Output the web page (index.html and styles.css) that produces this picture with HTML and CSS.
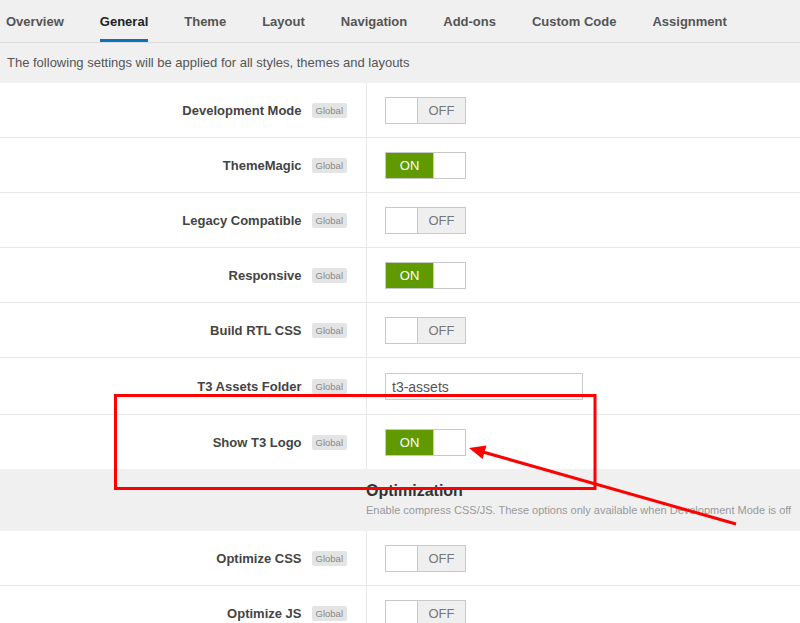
FILE: index.html
```html
<!DOCTYPE html>
<html>
<head>
    <title>T3 Framework - General</title>
    <link rel="stylesheet" href="styles.css">
</head>
<body>
    <div class="tabBar">
        <span class="tab">Overview</span>
        <span class="tab active">General</span>
        <span class="tab">Theme</span>
        <span class="tab">Layout</span>
        <span class="tab">Navigation</span>
        <span class="tab">Add-ons</span>
        <span class="tab">Custom Code</span>
        <span class="tab">Assignment</span>
    </div>
    <div class="intro">The following settings will be applied for all styles, themes and layouts</div>

    <div class="settings">
        <div class="row">
            <div class="rowLabel">Development Mode <span class="badge">Global</span></div>
            <div class="rowControl">
                <div class="toggle off"><span class="blank"></span><span class="state">OFF</span></div>
            </div>
        </div>
        <div class="row">
            <div class="rowLabel">ThemeMagic <span class="badge">Global</span></div>
            <div class="rowControl">
                <div class="toggle on"><span class="state">ON</span><span class="blank"></span></div>
            </div>
        </div>
        <div class="row">
            <div class="rowLabel">Legacy Compatible <span class="badge">Global</span></div>
            <div class="rowControl">
                <div class="toggle off"><span class="blank"></span><span class="state">OFF</span></div>
            </div>
        </div>
        <div class="row">
            <div class="rowLabel">Responsive <span class="badge">Global</span></div>
            <div class="rowControl">
                <div class="toggle on"><span class="state">ON</span><span class="blank"></span></div>
            </div>
        </div>
        <div class="row">
            <div class="rowLabel">Build RTL CSS <span class="badge">Global</span></div>
            <div class="rowControl">
                <div class="toggle off"><span class="blank"></span><span class="state">OFF</span></div>
            </div>
        </div>
        <div class="row tall">
            <div class="rowLabel">T3 Assets Folder <span class="badge">Global</span></div>
            <div class="rowControl">
                <input class="textInput" type="text" value="t3-assets">
            </div>
        </div>
        <div class="row last">
            <div class="rowLabel">Show T3 Logo <span class="badge">Global</span></div>
            <div class="rowControl">
                <div class="toggle on"><span class="state">ON</span><span class="blank"></span></div>
            </div>
        </div>

        <div class="groupHead">
            <h3>Optimization</h3>
            <p>Enable compress CSS/JS. These options only available when Development Mode is off</p>
        </div>

        <div class="row">
            <div class="rowLabel">Optimize CSS <span class="badge">Global</span></div>
            <div class="rowControl">
                <div class="toggle off"><span class="blank"></span><span class="state">OFF</span></div>
            </div>
        </div>
        <div class="row">
            <div class="rowLabel">Optimize JS <span class="badge">Global</span></div>
            <div class="rowControl">
                <div class="toggle off"><span class="blank"></span><span class="state">OFF</span></div>
            </div>
        </div>
    </div>

    <!-- screenshot annotation -->
    <svg class="markup" width="800" height="623" viewBox="0 0 800 623">
        <rect x="115.5" y="395.5" width="479.5" height="93" fill="none" stroke="#ff0000" stroke-width="3"/>
        <line x1="736" y1="524" x2="483" y2="452" stroke="#ff0000" stroke-width="3"/>
        <polygon points="469,448 482.6,459 486.4,445.6" fill="#ff0000"/>
    </svg>
</body>
</html>
```

FILE: styles.css
```css
body {
    margin: 0;
    font-family: "Liberation Sans", Arial, sans-serif;
    font-size: 13px;
    color: #444;
    background-color: #ffffff;
    position: relative;
    height: 623px;
    overflow: hidden;
}

.tabBar {
    background-color: #f0f0f0;
    border-bottom: 1px solid #dcdcdc;
    padding-left: 6px;
    display: flex;
    box-sizing: border-box;
    height: 43px;
}

.tab {
    font-weight: bold;
    font-size: 13px;
    color: #555;
    margin-right: 36px;
    height: 39px;
    line-height: 43px;
}

.tab.active {
    color: #222;
    border-bottom: 3px solid #0b73b8;
}

.intro {
    background-color: #f0f0f0;
    height: 40px;
    line-height: 40px;
    padding-left: 7px;
    color: #555;
}

.row {
    display: flex;
    height: 54px;
    border-bottom: 1px solid #e8e8e8;
}

.row.tall {
    height: 56px;
}

.row.last {
    border-bottom: none;
}

.rowLabel {
    width: 367px;
    box-sizing: border-box;
    border-right: 1px solid #e8e8e8;
    display: flex;
    align-items: center;
    justify-content: flex-end;
    padding-right: 19px;
    font-weight: bold;
    color: #444;
}

.badge {
    display: inline-block;
    background-color: #e4e4e4;
    color: #888;
    font-weight: normal;
    font-size: 9.5px;
    padding: 0 4px;
    height: 15px;
    line-height: 15px;
    margin-left: 10px;
    border-radius: 2px;
}

.rowControl {
    display: flex;
    align-items: center;
    padding-left: 18px;
}

.toggle {
    display: flex;
    height: 27px;
    width: 81px;
    box-sizing: border-box;
    border: 1px solid #c8c8c8;
}

.toggle .blank {
    width: 32px;
    background-color: #ffffff;
}

.toggle .state {
    width: 49px;
    text-align: center;
    line-height: 25px;
    font-size: 13px;
}

.toggle.off .state {
    background-color: #efefef;
    border-left: 1px solid #c8c8c8;
    color: #777;
}

.toggle.on .state {
    background-color: #5f9a00;
    color: #ffffff;
    border-right: 1px solid #c8c8c8;
}

.textInput {
    width: 198px;
    height: 27px;
    box-sizing: border-box;
    border: 1px solid #cccccc;
    padding: 0 6px;
    font-family: "Liberation Sans", Arial, sans-serif;
    font-size: 14px;
    color: #555;
    margin-top: 1px;
}

.groupHead {
    background-color: #f0f0f0;
    height: 62px;
    padding-left: 366px;
    box-sizing: border-box;
    padding-top: 13px;
}

.groupHead h3 {
    margin: 0;
    font-size: 16px;
    color: #333;
    line-height: 18px;
}

.groupHead p {
    margin: 3px 0 0 0;
    font-size: 11px;
    color: #999;
    line-height: 14px;
}

.markup {
    position: absolute;
    left: 0;
    top: 0;
    pointer-events: none;
}
```
